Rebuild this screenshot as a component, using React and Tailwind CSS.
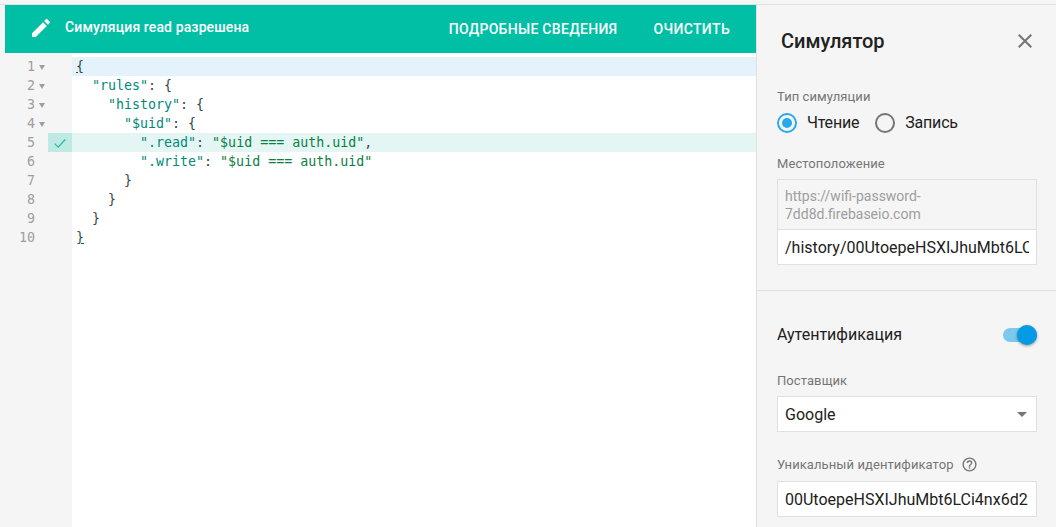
import React from 'react';

const lines = [
  { parts: [['{', 'b']], indent: 0, fold: true, active: true, underline: true },
  { parts: [['"rules"', 'k'], [': {', 'p']], indent: 2, fold: true },
  { parts: [['"history"', 'k'], [': {', 'p']], indent: 4, fold: true },
  { parts: [['"$uid"', 'k'], [': {', 'p']], indent: 6, fold: true },
  { parts: [['".read"', 'k'], [': ', 'p'], ['"$uid === auth.uid"', 's'], [',', 'p']], indent: 8, ok: true },
  { parts: [['".write"', 'k'], [': ', 'p'], ['"$uid === auth.uid"', 's']], indent: 8 },
  { parts: [['}', 'p']], indent: 6 },
  { parts: [['}', 'p']], indent: 4 },
  { parts: [['}', 'p']], indent: 2 },
  { parts: [['}', 'b']], indent: 0, underline: true },
];

const tokenColor = {
  k: 'text-[#00897b]',
  s: 'text-[#0b8043]',
  p: 'text-[#37474f]',
  b: 'text-[#37474f]',
};

const Label = ({ children }) => (
  <div className="text-[13px] leading-4 tracking-[0.08px] text-[#757575]">{children}</div>
);

const Radio = ({ checked, children }) => (
  <div className="flex items-center gap-[10px]">
    <div className={`flex h-5 w-5 items-center justify-center rounded-full border-2 ${checked ? 'border-[#29a9ea]' : 'border-[#757575]'}`}>
      {checked && <div className="h-[10px] w-[10px] rounded-full bg-[#29a9ea]" />}
    </div>
    <span className="text-base tracking-[-0.2px] text-[#212121]">{children}</span>
  </div>
);

const App = () => {
  return (
    <div className="flex h-[527px] w-[1056px] flex-col overflow-hidden bg-[#f5f5f5] font-['Roboto',sans-serif]">
      <div className="h-[5px] shrink-0 border-b border-[#e0e0e0]" />
      <div className="flex min-h-0 flex-1 pl-[5px]">
        {/* Editor */}
        <div className="flex w-[751px] shrink-0 flex-col">
          <div className="flex h-12 shrink-0 items-center bg-[#00bfa5] text-white">
            <svg viewBox="0 0 24 24" className="-mt-[2px] ml-[24px] h-6 w-6" fill="currentColor">
              <path d="M3 17.25V21h3.75L17.81 9.94l-3.75-3.75L3 17.25zM20.71 7.04a1 1 0 0 0 0-1.41l-2.34-2.34a1 1 0 0 0-1.41 0l-1.83 1.83 3.75 3.75 1.83-1.83z" />
            </svg>
            <div className="ml-3 -mt-[4px] text-sm font-medium tracking-[0.12px]">Симуляция read разрешена</div>
            <div className="ml-auto text-sm font-medium uppercase tracking-[0.3px]">Подробные сведения</div>
            <div className="ml-9 mr-[26px] text-sm font-medium uppercase tracking-[0.35px]">Очистить</div>
          </div>
          <div className="flex min-h-0 flex-1 bg-white font-['DejaVu_Sans_Mono',monospace] text-[13.3px] leading-[18px]">
            <div className="w-[67px] shrink-0 bg-[#f5f5f5] pt-1">
              {lines.map((line, i) => (
                <div key={i} className="flex h-[19px]">
                  <div className="w-[30px] shrink-0 pt-px text-right text-[#9e9e9e]">{i + 1}</div>
                  <div className="flex w-[10px] shrink-0 justify-end pt-[8px]">
                    {line.fold && <div className="h-0 w-0 border-x-[3px] border-t-[5px] border-x-transparent border-t-[#9e9e9e]" />}
                  </div>
                  {line.ok && (
                    <div className="ml-[3px] flex w-6 shrink-0 items-center justify-center bg-[#bfe9e3]">
                      <svg viewBox="0 0 24 24" className="h-[14px] w-[14px]" fill="none" stroke="#1dbfa5" strokeWidth="2.2">
                        <path d="M3 13l6 6L21 6" />
                      </svg>
                    </div>
                  )}
                </div>
              ))}
            </div>
            <div className="flex-1 pt-1">
              {lines.map((line, i) => (
                <div
                  key={i}
                  className={`h-[19px] whitespace-pre pl-1 pt-px ${line.active ? 'bg-[#e3f2fb]' : ''} ${line.ok ? 'bg-[#e3f6f4]' : ''}`}
                >
                  {' '.repeat(line.indent)}
                  {line.parts.map(([text, kind], j) => (
                    <span key={j} className={`${tokenColor[kind]} ${line.underline ? 'underline' : ''}`}>{text}</span>
                  ))}
                </div>
              ))}
            </div>
          </div>
        </div>

        {/* Simulator panel */}
        <div className="min-w-0 flex-1 border-l border-[#e0e0e0]">
          <div className="border-b border-[#e0e0e0] pb-[25px] pl-5 pr-[19px]">
            <div className="mb-3 flex h-[72px] items-center justify-between pl-1">
              <div className="text-xl font-medium text-[#212121]">Симулятор</div>
              <svg viewBox="0 0 24 24" className="h-6 w-6" fill="#757575">
                <path d="M19 6.41 17.59 5 12 10.59 6.41 5 5 6.41 10.59 12 5 17.59 6.41 19 12 13.41 17.59 19 19 17.59 13.41 12z" />
              </svg>
            </div>
            <Label>Тип симуляции</Label>
            <div className="mt-[8px] flex h-5 gap-[16px]">
              <Radio checked>Чтение</Radio>
              <Radio>Запись</Radio>
            </div>
            <div className="mt-[23px]">
              <Label>Местоположение</Label>
            </div>
            <div className="mt-[7px] border border-[#e0e0e0] bg-[#f5f5f5] px-[7px] pb-[6px] pt-[7px] text-sm leading-[18px] text-[#9e9e9e]">
              https://wifi-password-<br />7dd8d.firebaseio.com
            </div>
            <div className="-mt-px border border-[#e0e0e0] bg-white px-[7px] pt-px text-base leading-[33px] text-[#212121]">
              <div className="overflow-hidden whitespace-nowrap">/history/00UtoepeHSXIJhuMbt6LCi4nx6d2</div>
            </div>
          </div>
          <div className="pl-5 pr-[19px]">
            <div className="mt-[32px] flex h-6 items-center justify-between">
              <div className="text-base text-[#212121]">Аутентификация</div>
              <div className="relative h-[14px] w-[34px] rounded-full bg-[#7cc8ef]">
                <div className="absolute -top-[3px] right-0 h-5 w-5 rounded-full bg-[#039be5] shadow-[0_1px_3px_rgba(0,0,0,0.4)]" />
              </div>
            </div>
            <div className="mt-[26px]">
              <Label>Поставщик</Label>
            </div>
            <div className="mt-[7px] flex h-9 items-center justify-between border border-[#e0e0e0] bg-white px-[7px] pt-px text-base text-[#212121]">
              Google
              <div className="mr-[2px] h-0 w-0 border-x-[5px] border-t-[5px] border-x-transparent border-t-[#757575]" />
            </div>
            <div className="mt-[24px] flex items-center gap-[7px]">
              <Label>Уникальный идентификатор</Label>
              <svg viewBox="0 0 24 24" className="h-[17px] w-[17px]" fill="#757575">
                <path d="M11 18h2v-2h-2v2zm1-16a10 10 0 1 0 0 20 10 10 0 0 0 0-20zm0 18a8 8 0 1 1 0-16 8 8 0 0 1 0 16zm0-14a4 4 0 0 0-4 4h2a2 2 0 1 1 4 0c0 2-3 1.75-3 5h2c0-2.25 3-2.5 3-5a4 4 0 0 0-4-4z" />
              </svg>
            </div>
            <div className="mt-[8px] flex h-9 items-center border border-[#e0e0e0] bg-white px-[7px] pt-px text-base text-[#212121]">
              <div className="overflow-hidden whitespace-nowrap">00UtoepeHSXIJhuMbt6LCi4nx6d2</div>
            </div>
          </div>
        </div>
      </div>
    </div>
  );
};

export default App;
